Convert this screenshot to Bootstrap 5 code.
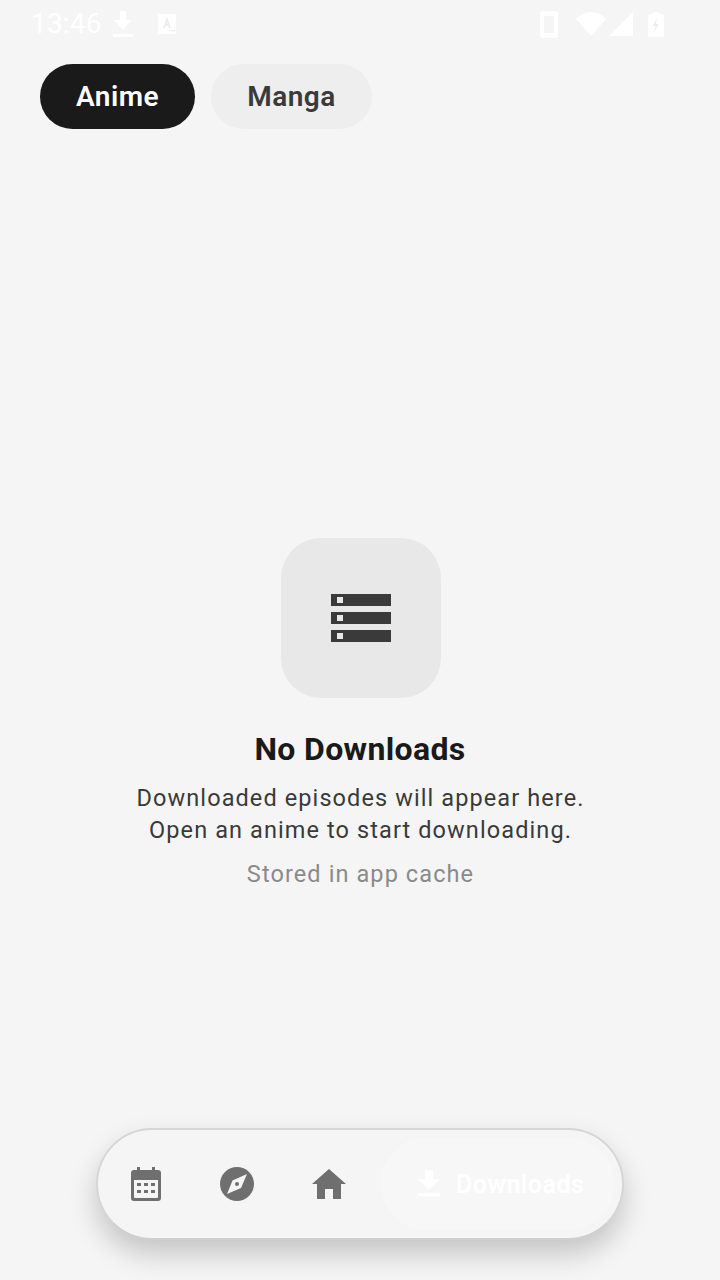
<!DOCTYPE html>
<html lang="en">
  <head>
    <meta charset="UTF-8" />
    <meta name="viewport" content="width=device-width, initial-scale=1.0" />
    <title>Downloads</title>
    <link rel="stylesheet" href="https://cdn.jsdelivr.net/npm/bootstrap@5.3.0/dist/css/bootstrap.min.css" />
    <script src="https://cdn.jsdelivr.net/npm/bootstrap@5.3.0/dist/js/bootstrap.bundle.min.js"></script>
    <style>
      body { background: #f5f5f5; font-family: Roboto, sans-serif; }
      .app-screen { width: 720px; height: 1280px; overflow: hidden; }
      .status-row { height: 48px; padding: 0 56px 0 31px; color: #fff; font-size: 28px; }
      .status-time { width: 70px; line-height: 46px; letter-spacing: 0.2px; }
      .status-dl { margin-left: 12px; }
      .status-kbd { margin-left: 25px; }
      .status-wifi { margin-left: 18px; }
      .status-signal { margin-left: 3px; }
      .status-batt { margin-left: 15px; }
      .tab-row { padding: 16px 40px 0; gap: 16px; }
      .tab-chip { height: 65px; border-radius: 33px; border: 0; font-size: 28px; font-weight: 600; letter-spacing: 0.45px; }
      .tab-on { width: 155px; background: #1a1a1a; color: #fff; }
      .tab-off { width: 161px; background: #eeeeee; color: #3a3a3a; }
      .empty-area { padding-top: 409px; padding-left: 1px; }
      .empty-box { width: 160px; height: 160px; border-radius: 40px; background: #e8e8e8; }
      .empty-title { font-size: 32px; font-weight: 700; color: #1a1a1a; line-height: 36px; margin: 33px 0 0 -1px; letter-spacing: 0.35px; }
      .empty-text { font-size: 23.5px; line-height: 32px; color: #3a3a3a; letter-spacing: 1.1px; margin: 15px 0 0 0; }
      .empty-note { font-size: 23.5px; line-height: 32px; color: #8a8a8a; letter-spacing: 1.1px; margin: 12px 0 0 0; }
      .dock { width: 528px; height: 112px; margin: 0 0 40px 96px; border: 2px solid #d6d6d6; border-bottom-color: #cfcfcf; border-radius: 56px; background: #f5f5f5; box-shadow: 0 14px 28px rgba(0, 0, 0, 0.2); padding: 0 8px 0 1px; }
      .dock-btn { width: 92px; }
      .dock-cal { padding-left: 2px; }
      .dock-active { width: 233px; height: 94px; margin-left: auto; border-radius: 47px; background: #f7f7f7; color: #fff; font-size: 25px; font-weight: 600; letter-spacing: 0.5px; gap: 16px; padding-left: 37px; }
      .dock-active svg { margin-bottom: 2px; }
      .dock-active span { margin-top: 2px; }
    </style>
  </head>

  <body>
    <div class="app-screen d-flex flex-column">
      <div class="status-row d-flex align-items-center">
        <span class="status-time">13:46</span>
        <svg class="status-dl" width="20" height="26" viewBox="0 0 20 26" fill="#fff"><path d="M7 0h6v9h6L10 19 1 9h6zM0 23h20v3H0z" /></svg>
        <svg class="status-kbd" width="18" height="20" viewBox="0 0 18 20"><rect width="18" height="20" fill="#fff" /><path d="M9 3l-4 11h2l.8-2.4h2.4L11 14h2L9 3zm-.6 7L9 7.5l.6 2.5z" fill="#ececec" /><path d="M11 16h1.5v1.5H11zM13.2 16h1.5v1.5h-1.5zM15.4 16h1.5v1.5h-1.5z" fill="#ececec" /></svg>
        <svg class="ms-auto" width="18" height="27" viewBox="0 0 18 27"><path fill-rule="evenodd" d="M3 0h12a3 3 0 0 1 3 3v21a3 3 0 0 1-3 3H3a3 3 0 0 1-3-3V3a3 3 0 0 1 3-3zm1 5v17h10V5z" fill="#fff" /></svg>
        <svg class="status-wifi" width="30" height="24" viewBox="0 0 30 24" fill="#fff"><path d="M15 24L0 7c8-9 22-9 30 0z" /></svg>
        <svg class="status-signal" width="24" height="24" viewBox="0 0 24 24" fill="#fff"><path d="M24 0v24H0z" /></svg>
        <svg class="status-batt" width="16" height="25" viewBox="0 0 16 25"><path d="M5 0h6v2h3a2 2 0 0 1 2 2v19a2 2 0 0 1-2 2H2a2 2 0 0 1-2-2V4a2 2 0 0 1 2-2h3z" fill="#fff" /><path d="M9 6l-4 8h2.500l-1 6 4-8H8z" fill="#ececec" /></svg>
      </div>

      <div class="tab-row d-flex">
        <button type="button" class="tab-chip tab-on">Anime</button>
        <button type="button" class="tab-chip tab-off">Manga</button>
      </div>

      <main class="empty-area flex-grow-1 d-flex flex-column align-items-center text-center">
        <div class="empty-box d-flex align-items-center justify-content-center">
          <svg width="60" height="48" viewBox="0 0 60 48"><path fill="#3a3a3a" d="M0 0h60v12H0zM0 18h60v12H0zM0 36h60v12H0z" /><path fill="#e8e8e8" d="M6 3h6v6H6zM6 21h6v6H6zM6 39h6v6H6z" /></svg>
        </div>
        <h1 class="empty-title">No Downloads</h1>
        <p class="empty-text mb-0">Downloaded episodes will appear here.<br />Open an anime to start downloading.</p>
        <p class="empty-note mb-0">Stored in app cache</p>
      </main>

      <nav class="dock d-flex align-items-center">
        <div class="dock-btn dock-cal d-flex justify-content-center">
          <svg width="30" height="34" viewBox="0 0 30 34"><path fill="#6f6f6f" fill-rule="evenodd" d="M6 0h3v3h12V0h3v3h3a3 3 0 0 1 3 3v25a3 3 0 0 1-3 3H3a3 3 0 0 1-3-3V6a3 3 0 0 1 3-3h3zM3 13v17a1 1 0 0 0 1 1h22a1 1 0 0 0 1-1V13zM6 16h4v3H6zM13 16h4v3h-4zM20 16h4v3h-4zM6 23h4v3H6zM13 23h4v3h-4zM20 23h4v3h-4z" /></svg>
        </div>
        <div class="dock-btn d-flex justify-content-center">
          <svg width="34" height="34" viewBox="0 0 34 34"><circle cx="17" cy="17" r="17" fill="#6f6f6f" /><path fill="#f5f5f5" fill-rule="evenodd" d="M27 7l-14.500 6.500L7 27l14-6zM17 15a2 2 0 1 1 0 4 2 2 0 0 1 0-4z" /></svg>
        </div>
        <div class="dock-btn d-flex justify-content-center">
          <svg width="34" height="30" viewBox="0 0 34 30"><path fill="#6f6f6f" d="M17 0l17 15h-5v15h-8V20h-8v10H5V15H0z" /></svg>
        </div>
        <div class="dock-active d-flex align-items-center">
          <svg width="22" height="26" viewBox="0 0 22 26" fill="#fff"><path d="M7 0h8v9h7L11 20 0 9h7zM0 23h22v3H0z" /></svg>
          <span>Downloads</span>
        </div>
      </nav>
    </div>
  </body>
</html>
